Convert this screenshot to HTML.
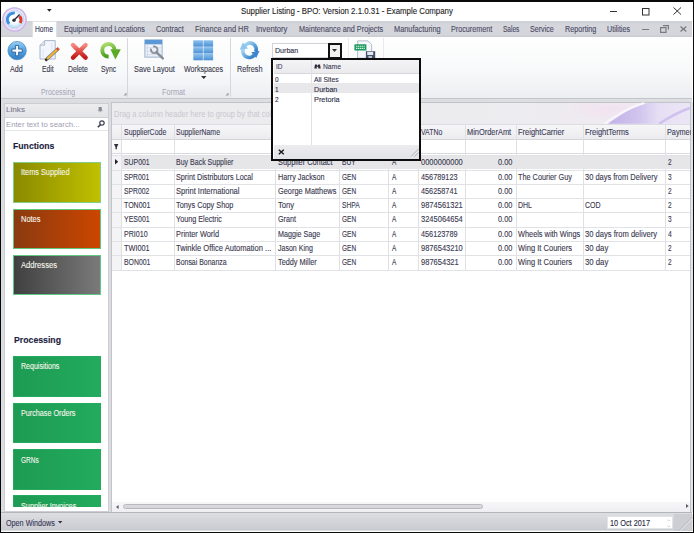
<!DOCTYPE html>
<html><head><meta charset="utf-8">
<style>
*{margin:0;padding:0;box-sizing:border-box}
html,body{width:694px;height:533px;overflow:hidden;background:#fff}
body{font-family:"Liberation Sans",sans-serif;position:relative}
.a{position:absolute}
.t{position:absolute;white-space:nowrap;transform-origin:0 0;-webkit-text-stroke:0.12px currentColor}
svg{position:absolute;overflow:visible}
</style></head><body>
<div class="a" style="left:1.30px;top:1.50px;width:691.20px;height:530.00px;background:#fff"></div>
<div class="t" style="left:240.80px;top:6.90px;font-size:8.80px;line-height:9.83px;color:#1e1e1e;transform:scaleX(0.8936);">Supplier Listing - BPO: Version 2.1.0.31 - Example Company</div>
<div class="a" style="left:610.00px;top:10.50px;width:6.50px;height:1.00px;background:#333"></div>
<svg style="left:641.5px;top:7.5px" width="8" height="8"><rect x="0.5" y="0.5" width="6.5" height="6.5" stroke="#333" fill="none" stroke-width="1"/></svg>
<svg style="left:673px;top:7px" width="9" height="8"><path d="M0.5 0.5L8 7.5M8 0.5L0.5 7.5" stroke="#333" stroke-width="1"/></svg>
<svg style="left:47.3px;top:9px" width="5" height="4"><path d="M0 0H4.6L2.3 2.8Z" fill="#222"/></svg>
<div class="a" style="left:1.30px;top:21.00px;width:691.20px;height:15.50px;background:linear-gradient(#cfd0d5,#d6d7dc 30%,#d4d5da 85%,#c9cacf)"></div>
<div class="a" style="left:31.70px;top:21.00px;width:25.70px;height:16.00px;background:#fff;border:1px solid #dedfe3;border-bottom:none"></div>
<div class="t" style="left:34.60px;top:25.00px;font-size:8.30px;line-height:9.27px;color:#3b3b5c;transform:scaleX(0.8083);">Home</div>
<div class="t" style="left:64.20px;top:25.00px;font-size:8.30px;line-height:9.27px;color:#4b4b66;transform:scaleX(0.8626);">Equipment and Locations</div>
<div class="t" style="left:156.00px;top:25.00px;font-size:8.30px;line-height:9.27px;color:#4b4b66;transform:scaleX(0.8831);">Contract</div>
<div class="t" style="left:194.80px;top:25.00px;font-size:8.30px;line-height:9.27px;color:#4b4b66;transform:scaleX(0.8987);">Finance and HR</div>
<div class="t" style="left:256.30px;top:25.00px;font-size:8.30px;line-height:9.27px;color:#4b4b66;transform:scaleX(0.9198);">Inventory</div>
<div class="t" style="left:298.80px;top:25.00px;font-size:8.30px;line-height:9.27px;color:#4b4b66;transform:scaleX(0.8773);">Maintenance and Projects</div>
<div class="t" style="left:394.00px;top:25.00px;font-size:8.30px;line-height:9.27px;color:#4b4b66;transform:scaleX(0.8879);">Manufacturing</div>
<div class="t" style="left:451.10px;top:25.00px;font-size:8.30px;line-height:9.27px;color:#4b4b66;transform:scaleX(0.8692);">Procurement</div>
<div class="t" style="left:503.30px;top:25.00px;font-size:8.30px;line-height:9.27px;color:#4b4b66;transform:scaleX(0.7900);">Sales</div>
<div class="t" style="left:530.30px;top:25.00px;font-size:8.30px;line-height:9.27px;color:#4b4b66;transform:scaleX(0.8598);">Service</div>
<div class="t" style="left:564.80px;top:25.00px;font-size:8.30px;line-height:9.27px;color:#4b4b66;transform:scaleX(0.8725);">Reporting</div>
<div class="t" style="left:607.00px;top:25.00px;font-size:8.30px;line-height:9.27px;color:#4b4b66;transform:scaleX(0.8598);">Utilities</div>
<div class="a" style="left:642.30px;top:29.20px;width:6.30px;height:1.30px;background:#7a7a82"></div>
<svg style="left:660px;top:25px" width="9" height="8"><path d="M3 0.6H8.4V4.6M0.6 2.6H6V7.4H0.6Z" stroke="#7a7a82" fill="none" stroke-width="1.2"/></svg>
<svg style="left:680px;top:26.2px" width="7" height="6"><path d="M0.5 0.5L6.3 5.5M6.3 0.5L0.5 5.5" stroke="#7a7a82" stroke-width="1.3"/></svg>
<svg style="left:1px;top:6px" width="27" height="27" viewBox="0 0 27 27">
<defs><radialGradient id="lface" cx="50%" cy="45%" r="50%"><stop offset="0.45" stop-color="#ffffff"/><stop offset="0.8" stop-color="#d6ecfa"/><stop offset="1" stop-color="#b8d8f2"/></radialGradient></defs>
<circle cx="13.5" cy="13.5" r="12.2" fill="#e6dbf3"/>
<circle cx="13.5" cy="13.5" r="11.6" fill="none" stroke="#c9b6e6" stroke-width="1.4"/>
<circle cx="13.5" cy="13.5" r="10.2" fill="#faf8fd"/>
<circle cx="13.5" cy="13.5" r="9.4" fill="none" stroke="#d4c6ec" stroke-width="0.9"/>
<circle cx="13.5" cy="13.5" r="8.8" fill="url(#lface)"/>
<path d="M8.2 17.8A6.3 6.3 0 0 1 13.8 7.2" stroke="#3a8ee0" stroke-width="2.8" fill="none"/>
<path d="M18.6 10.2A6.3 6.3 0 0 1 19.2 17" stroke="#e03a2a" stroke-width="3" fill="none"/>
<path d="M13 14.2L18.6 8.6" stroke="#2a3040" stroke-width="1.4"/><circle cx="13" cy="14.2" r="1.7" fill="#2a3040"/>
</svg>
<div class="a" style="left:1.30px;top:36.50px;width:691.20px;height:61.20px;background:linear-gradient(#fefefe,#f8f9fa 55%,#eceef1)"></div>
<div class="a" style="left:1.30px;top:86.00px;width:229.10px;height:11.70px;background:linear-gradient(#f0f1f4,#e9eaee)"></div>
<div class="a" style="left:1.30px;top:97.70px;width:691.20px;height:1.30px;background:#c3c4c9"></div>
<div class="a" style="left:1.30px;top:99.00px;width:691.20px;height:3.00px;background:#dfe0e4"></div>
<div class="a" style="left:127.30px;top:38.00px;width:1.00px;height:59.00px;background:#d6d7dc"></div>
<div class="a" style="left:230.40px;top:38.00px;width:1.00px;height:59.00px;background:#d6d7dc"></div>
<div class="a" style="left:347.70px;top:38.00px;width:1.00px;height:20.00px;background:#e9eaed"></div>
<div class="a" style="left:382.80px;top:38.00px;width:1.00px;height:20.00px;background:#e9eaed"></div>
<div class="t" style="left:41.20px;top:87.80px;font-size:8.30px;line-height:9.27px;color:#a2a2b4;transform:scaleX(0.8329);-webkit-text-stroke:0;">Processing</div>
<div class="t" style="left:161.80px;top:87.80px;font-size:8.30px;line-height:9.27px;color:#a2a2b4;transform:scaleX(0.8750);-webkit-text-stroke:0;">Format</div>
<svg style="left:122.5px;top:92px" width="4" height="4"><path d="M3.5 0.5V3.5H0.5Z" fill="#9a9aa2"/></svg>
<svg style="left:224.5px;top:92px" width="4" height="4"><path d="M3.5 0.5V3.5H0.5Z" fill="#9a9aa2"/></svg>
<div class="t" style="left:10.30px;top:64.80px;font-size:8.30px;line-height:9.27px;color:#3a3a4c;transform:scaleX(0.8601);">Add</div>
<div class="t" style="left:41.70px;top:64.80px;font-size:8.30px;line-height:9.27px;color:#3a3a4c;transform:scaleX(0.8111);">Edit</div>
<div class="t" style="left:67.90px;top:64.80px;font-size:8.30px;line-height:9.27px;color:#3a3a4c;transform:scaleX(0.8252);">Delete</div>
<div class="t" style="left:101.20px;top:64.80px;font-size:8.30px;line-height:9.27px;color:#3a3a4c;transform:scaleX(0.8184);">Sync</div>
<div class="t" style="left:134.00px;top:64.80px;font-size:8.30px;line-height:9.27px;color:#3a3a4c;transform:scaleX(0.8841);">Save Layout</div>
<div class="t" style="left:183.90px;top:64.80px;font-size:8.30px;line-height:9.27px;color:#3a3a4c;transform:scaleX(0.8592);">Workspaces</div>
<div class="t" style="left:236.90px;top:64.80px;font-size:8.30px;line-height:9.27px;color:#3a3a4c;transform:scaleX(0.8810);">Refresh</div>
<svg style="left:201px;top:75.5px" width="6" height="4"><path d="M0 0H5.5L2.75 3Z" fill="#333"/></svg>
<svg style="left:7px;top:40.8px" width="21" height="21" viewBox="0 0 21 21">
<defs><linearGradient id="ga" x1="0" y1="0" x2="0" y2="1"><stop offset="0" stop-color="#9ccff2"/><stop offset="0.45" stop-color="#5aa6e0"/><stop offset="1" stop-color="#2f7cc4"/></linearGradient></defs>
<circle cx="10.1" cy="9.6" r="9.2" fill="url(#ga)" stroke="#3f86c6" stroke-width="0.7"/>
<path d="M8.6 4.4H11.6V8.1H15.3V11.1H11.6V14.8H8.6V11.1H4.9V8.1H8.6Z" fill="#fafcff" stroke="#2a5f9c" stroke-width="0.9"/>
</svg>
<svg style="left:38.5px;top:40px" width="22" height="22" viewBox="0 0 22 22">
<path d="M5.6 0.6H16.2V19H1V5.2Z" fill="#f2f5fb" stroke="#a2aec6" stroke-width="0.9"/>
<path d="M1 5.2H5.6V0.6" fill="#dfe5f0" stroke="#a2aec6" stroke-width="0.8"/>
<path d="M4 9V17M12.8 3V17" stroke="#d4e4f4" stroke-width="0.8"/>
<path d="M18.6 9.2L7.4 19.6" stroke="#4a6aa0" stroke-width="3.4"/>
<path d="M18.6 9.2L7.4 19.6" stroke="#f2b430" stroke-width="2.4"/>
<path d="M19.8 8.1L17.9 9.9" stroke="#e0503a" stroke-width="3.2"/>
<path d="M8 19L6.3 20.6" stroke="#2a2a36" stroke-width="2.4"/>
</svg>
<svg style="left:69.5px;top:41.5px" width="19" height="19" viewBox="0 0 19 19">
<defs><linearGradient id="gd" x1="0" y1="0" x2="0" y2="1"><stop offset="0" stop-color="#f48a84"/><stop offset="0.5" stop-color="#e04a44"/><stop offset="1" stop-color="#c01c1c"/></linearGradient></defs>
<path d="M3 3L15.6 15.6M15.6 3L3 15.6" stroke="url(#gd)" stroke-width="4.4" stroke-linecap="round"/>
</svg>
<svg style="left:98.5px;top:41px" width="23" height="20" viewBox="0 0 23 20">
<defs><linearGradient id="gs" x1="0" y1="0" x2="0.3" y2="1"><stop offset="0" stop-color="#b0e070"/><stop offset="1" stop-color="#4a9e1c"/></linearGradient></defs>
<path d="M9.6 15.4A6.2 6.2 0 1 1 15.6 8.6" stroke="url(#gs)" stroke-width="4" fill="none"/>
<path d="M11.4 8.2H21.8L16.4 18.6Z" fill="#5aaa26"/>
</svg>
<svg style="left:143.5px;top:38.8px" width="22" height="22" viewBox="0 0 22 22">
<rect x="0.9" y="0.9" width="17.2" height="17.2" fill="#eef3fa" stroke="#90a8c8" stroke-width="0.9"/>
<rect x="0.9" y="0.9" width="17.2" height="4.4" fill="#5a98d6"/>
<path d="M1 8.8H18M1 12.3H18M1 15.6H18M3.4 5.3V18" stroke="#c8d4e4" stroke-width="0.7"/>
<path d="M9.07 7.7A3.3 3.3 0 1 1 7.1 9.67" stroke="#8c939c" stroke-width="1.9" fill="none"/>
<path d="M12.6 13.4L18.8 19.4" stroke="#858c96" stroke-width="2.4" stroke-linecap="round"/>
</svg>
<svg style="left:193px;top:39.6px" width="21" height="21" viewBox="0 0 21 21">
<defs><linearGradient id="gw" x1="0" y1="0" x2="0" y2="1"><stop offset="0" stop-color="#8cc0ec"/><stop offset="1" stop-color="#4a90d6"/></linearGradient></defs>
<rect x="0.30" y="0.30" width="9.6" height="6.4" fill="url(#gw)"/><rect x="10.50" y="0.30" width="9.6" height="6.4" fill="url(#gw)"/><rect x="0.30" y="7.10" width="9.6" height="6.4" fill="url(#gw)"/><rect x="10.50" y="7.10" width="9.6" height="6.4" fill="url(#gw)"/><rect x="0.30" y="13.90" width="9.6" height="6.4" fill="url(#gw)"/><rect x="10.50" y="13.90" width="9.6" height="6.4" fill="url(#gw)"/></svg>
<svg style="left:236px;top:38.2px" width="27" height="24" viewBox="0 0 27 24">
<defs><linearGradient id="gr" x1="0" y1="0" x2="1" y2="1"><stop offset="0" stop-color="#b4dcf6"/><stop offset="0.6" stop-color="#5aa2dc"/><stop offset="1" stop-color="#2f78c0"/></linearGradient></defs>
<path d="M8.2 8.6A6 6 0 0 1 19.6 13.8" stroke="url(#gr)" stroke-width="3.6" fill="none"/>
<path d="M18.8 15.8A6 6 0 0 1 7.4 10.6" stroke="url(#gr)" stroke-width="3.6" fill="none"/>
<path d="M3.8 11.8L6.8 4.6L12 10.4Z" fill="#8cc6ee"/>
<path d="M23.6 12.8L20.2 20L15.2 14.2Z" fill="#3c86cc"/>
</svg>
<div class="a" style="left:272.30px;top:43.20px;width:57.00px;height:15.00px;background:#fff;border:1px solid #d0d2d8"></div>
<div class="t" style="left:275.30px;top:47.30px;font-size:7.80px;line-height:8.71px;color:#2e2e46;transform:scaleX(0.9068);">Durban</div>
<div class="a" style="left:327.80px;top:42.50px;width:14.20px;height:16.00px;background:#f0f0f2;border:2px solid #111"></div>
<svg style="left:332.3px;top:49px" width="6" height="4"><path d="M0 0H5L2.5 3Z" fill="#333"/></svg>
<svg style="left:353.5px;top:39.5px" width="22" height="20" viewBox="0 0 22 20">
<path d="M3.6 0.9H14L17.6 4.5V18.2H3.6Z" fill="#f6f8fb" stroke="#aab2c6" stroke-width="0.9"/>
<rect x="0.4" y="4.3" width="12" height="6.2" rx="0.6" fill="#1d9a5e"/>
<path d="M2 6.2H10.8M2 8.4H10.8" stroke="#d8f0e2" stroke-width="1.1" stroke-dasharray="1.4 0.6"/>
<rect x="11.9" y="11.2" width="9.3" height="7" fill="#46506a"/>
<rect x="13.2" y="11.8" width="6" height="3.2" fill="#e4e9f0"/>
<rect x="14.4" y="16" width="3.6" height="2.2" fill="#b8c2d0"/>
</svg>
<div class="a" style="left:1.30px;top:99.60px;width:691.20px;height:412.00px;background:#dcdde1"></div>
<div class="a" style="left:3.80px;top:102.60px;width:105.20px;height:409.00px;background:#fff;border:1px solid #cdced3"></div>
<div class="a" style="left:4.80px;top:103.60px;width:103.20px;height:14.00px;background:linear-gradient(#ececee,#e2e3e6)"></div>
<div class="a" style="left:4.80px;top:117.40px;width:103.20px;height:0.80px;background:#cfd0d4"></div>
<div class="t" style="left:6.30px;top:106.30px;font-size:8.00px;line-height:8.94px;color:#7c7c92;transform:scaleX(1.0176);">Links</div>
<svg style="left:97.5px;top:107px" width="5" height="5"><rect x="0.6" y="0" width="3.2" height="3.3" fill="#8a8a96"/><rect x="0" y="3.2" width="4.4" height="0.9" fill="#8a8a96"/><rect x="1.8" y="4" width="0.8" height="1.2" fill="#8a8a96"/></svg>
<div class="a" style="left:4.80px;top:118.20px;width:103.20px;height:11.40px;background:#fff"></div>
<div class="a" style="left:4.80px;top:129.60px;width:103.20px;height:0.80px;background:#e4e5e8"></div>
<div class="t" style="left:6.20px;top:120.60px;font-size:8.00px;line-height:8.94px;color:#9e9eb2;transform:scaleX(0.9667);-webkit-text-stroke:0;">Enter text to search...</div>
<svg style="left:97.2px;top:120px" width="8" height="8"><circle cx="5" cy="3" r="2.2" stroke="#3c3c4c" stroke-width="1.2" fill="none"/><path d="M3.5 4.6L0.8 7.3" stroke="#3c3c4c" stroke-width="1.5"/></svg>
<div class="t" style="left:13.30px;top:141.00px;font-size:9.00px;line-height:10.05px;color:#1c1c40;font-weight:bold;transform:scaleX(0.9629);">Functions</div>
<div class="t" style="left:13.50px;top:335.00px;font-size:9.00px;line-height:10.05px;color:#1c1c40;font-weight:bold;transform:scaleX(0.9687);">Processing</div>
<div class="a" style="left:4.8px;top:130.4px;width:103.2px;height:377px;overflow:hidden">
<div class="a" style="left:8.40px;top:31.50px;width:87.50px;height:40.90px;background:linear-gradient(90deg,#8a8a00,#c0c000);border:1px solid #7fcf8a"></div>
<div class="t" style="left:16.20px;top:38.00px;font-size:8.30px;line-height:9.27px;color:#f4f4ea;transform:scaleX(0.8834);">Items Supplied</div>
<div class="a" style="left:8.40px;top:78.50px;width:87.50px;height:40.10px;background:linear-gradient(90deg,#8a3a10,#cc4600);border:1px solid #62c87e"></div>
<div class="t" style="left:16.20px;top:85.00px;font-size:8.30px;line-height:9.27px;color:#f4f4ea;transform:scaleX(0.8995);">Notes</div>
<div class="a" style="left:8.40px;top:124.60px;width:87.50px;height:40.50px;background:linear-gradient(90deg,#404040,#7a7a7a);border:1px solid #60c888"></div>
<div class="t" style="left:16.20px;top:131.10px;font-size:8.30px;line-height:9.27px;color:#f4f4ea;transform:scaleX(0.9180);">Addresses</div>
<div class="a" style="left:8.40px;top:225.50px;width:87.50px;height:40.90px;background:linear-gradient(90deg,#1d9b52,#22ab5e);border:1px solid #22ab5e"></div>
<div class="t" style="left:16.20px;top:232.00px;font-size:8.30px;line-height:9.27px;color:#f4f4ea;transform:scaleX(0.8494);">Requisitions</div>
<div class="a" style="left:8.40px;top:272.40px;width:87.50px;height:40.30px;background:linear-gradient(90deg,#1d9b52,#22ab5e);border:1px solid #22ab5e"></div>
<div class="t" style="left:16.20px;top:278.90px;font-size:8.30px;line-height:9.27px;color:#f4f4ea;transform:scaleX(0.8687);">Purchase Orders</div>
<div class="a" style="left:8.40px;top:318.70px;width:87.50px;height:40.60px;background:linear-gradient(90deg,#1d9b52,#22ab5e);border:1px solid #22ab5e"></div>
<div class="t" style="left:16.20px;top:325.20px;font-size:8.30px;line-height:9.27px;color:#f4f4ea;transform:scaleX(0.7834);">GRNs</div>
<div class="a" style="left:8.40px;top:365.10px;width:87.50px;height:39.50px;background:linear-gradient(90deg,#1d9b52,#22ab5e);border:1px solid #22ab5e"></div>
<div class="t" style="left:16.20px;top:371.60px;font-size:8.30px;line-height:9.27px;color:#f4f4ea;transform:scaleX(0.8749);">Supplier Invoices</div>
</div>
<div class="a" style="left:110.50px;top:102.00px;width:580.70px;height:410.00px;background:#fff;border:1px solid #c3c4c9"></div>
<div class="a" style="left:111.50px;top:103.00px;width:578.70px;height:20.80px;background:linear-gradient(90deg,#ececee 0,#ececee 60%,#efeaf3 100%)"></div>
<svg style="left:560px;top:103px" width="130" height="20.8" viewBox="0 0 130 20.8">
<defs><linearGradient id="sw1" gradientUnits="userSpaceOnUse" x1="48" y1="0" x2="130" y2="0"><stop offset="0" stop-color="#c2b0e8"/><stop offset="0.4" stop-color="#d2c6ee"/><stop offset="0.62" stop-color="#e6dff4"/><stop offset="1" stop-color="#ebe6f5"/></linearGradient>
<radialGradient id="sw2" cx="0.5" cy="0.3" r="0.6"><stop offset="0" stop-color="#f2e2f0"/><stop offset="1" stop-color="#f2e2f0" stop-opacity="0"/></radialGradient></defs>
<rect x="10" y="0" width="80" height="20.8" fill="url(#sw2)"/>
<path d="M48 20.8C60 12 72 4 88 0H130V20.8Z" fill="url(#sw1)"/>
<path d="M44.5 20.8C57 12 69 4 84 0" stroke="#f8f6fc" stroke-width="2.2" fill="none"/>
<path d="M99 20.8C108 15 118 9 130 5" stroke="#d0c0ee" stroke-width="2.4" fill="none"/>
</svg>
<div class="t" style="left:113.50px;top:109.60px;font-size:8.30px;line-height:9.27px;color:#c8c8ce;transform:scaleX(0.9049);-webkit-text-stroke:0;">Drag a column header here to group by that column</div>
<div class="a" style="left:111.50px;top:123.60px;width:578.70px;height:15.40px;background:linear-gradient(#f6f6f8,#ececef);border-top:1px solid #dcdde0"></div>
<div class="a" style="left:111.50px;top:139.20px;width:578.70px;height:0.80px;background:#d4d5d9"></div>
<div class="a" style="left:111.50px;top:152.60px;width:578.70px;height:1.90px;background:#d9dadd"></div>
<div class="a" style="left:121.30px;top:123.80px;width:0.90px;height:145.80px;background:#dfe0e3"></div>
<div class="a" style="left:173.60px;top:123.80px;width:0.90px;height:145.80px;background:#dfe0e3"></div>
<div class="a" style="left:275.20px;top:123.80px;width:0.90px;height:145.80px;background:#dfe0e3"></div>
<div class="a" style="left:339.40px;top:123.80px;width:0.90px;height:145.80px;background:#dfe0e3"></div>
<div class="a" style="left:388.40px;top:123.80px;width:0.90px;height:145.80px;background:#dfe0e3"></div>
<div class="a" style="left:418.10px;top:123.80px;width:0.90px;height:145.80px;background:#dfe0e3"></div>
<div class="a" style="left:465.00px;top:123.80px;width:0.90px;height:145.80px;background:#dfe0e3"></div>
<div class="a" style="left:515.50px;top:123.80px;width:0.90px;height:145.80px;background:#dfe0e3"></div>
<div class="a" style="left:583.00px;top:123.80px;width:0.90px;height:145.80px;background:#dfe0e3"></div>
<div class="a" style="left:664.50px;top:123.80px;width:0.90px;height:145.80px;background:#dfe0e3"></div>
<div class="a" style="left:111.50px;top:140.00px;width:9.80px;height:12.60px;background:#fafafb"></div>
<div class="a" style="left:111.50px;top:155.20px;width:9.80px;height:114.40px;background:#f4f4f6"></div>
<div class="t" style="left:124.30px;top:127.50px;font-size:8.30px;line-height:9.27px;color:#40405a;transform:scaleX(0.8410);">SupplierCode</div>
<div class="t" style="left:176.00px;top:127.50px;font-size:8.30px;line-height:9.27px;color:#40405a;transform:scaleX(0.8367);">SupplierName</div>
<div class="t" style="left:420.60px;top:127.50px;font-size:8.30px;line-height:9.27px;color:#40405a;transform:scaleX(0.8346);">VATNo</div>
<div class="t" style="left:467.30px;top:127.50px;font-size:8.30px;line-height:9.27px;color:#40405a;transform:scaleX(0.8958);">MinOrderAmt</div>
<div class="t" style="left:517.60px;top:127.50px;font-size:8.30px;line-height:9.27px;color:#40405a;transform:scaleX(0.9024);">FreightCarrier</div>
<div class="t" style="left:585.10px;top:127.50px;font-size:8.30px;line-height:9.27px;color:#40405a;transform:scaleX(0.9044);">FreightTerms</div>
<div class="t" style="left:666.50px;top:127.50px;font-size:8.30px;line-height:9.27px;color:#40405a;transform:scaleX(0.8771);">Payment</div>
<svg style="left:113.8px;top:143.6px" width="5" height="6"><path d="M0 0H4.4L2.9 3.2V5.2H1.5V3.2Z" fill="#2e2e40"/></svg>
<div class="a" style="left:121.30px;top:155.20px;width:568.90px;height:14.30px;background:#e6e6e9"></div>
<div class="a" style="left:111.50px;top:155.20px;width:578.70px;height:0.90px;background:#e1e2e5"></div>
<div class="a" style="left:111.50px;top:169.50px;width:578.70px;height:0.90px;background:#e1e2e5"></div>
<div class="a" style="left:111.50px;top:183.80px;width:578.70px;height:0.90px;background:#e1e2e5"></div>
<div class="a" style="left:111.50px;top:198.10px;width:578.70px;height:0.90px;background:#e1e2e5"></div>
<div class="a" style="left:111.50px;top:212.40px;width:578.70px;height:0.90px;background:#e1e2e5"></div>
<div class="a" style="left:111.50px;top:226.70px;width:578.70px;height:0.90px;background:#e1e2e5"></div>
<div class="a" style="left:111.50px;top:241.00px;width:578.70px;height:0.90px;background:#e1e2e5"></div>
<div class="a" style="left:111.50px;top:255.30px;width:578.70px;height:0.90px;background:#e1e2e5"></div>
<div class="a" style="left:111.50px;top:269.60px;width:578.70px;height:0.90px;background:#e1e2e5"></div>
<svg style="left:114.5px;top:159px" width="4" height="6"><path d="M0 0L3.2 2.7L0 5.4Z" fill="#222"/></svg>
<div class="t" style="left:124.30px;top:158.20px;font-size:8.30px;line-height:9.27px;color:#3a3a50;transform:scaleX(0.8312);">SUP001</div>
<div class="t" style="left:176.00px;top:158.20px;font-size:8.30px;line-height:9.27px;color:#3a3a50;transform:scaleX(0.8464);">Buy Back Supplier</div>
<div class="t" style="left:277.60px;top:158.20px;font-size:8.30px;line-height:9.27px;color:#3a3a50;transform:scaleX(0.8898);">Supplier Contact</div>
<div class="t" style="left:342.10px;top:158.20px;font-size:8.30px;line-height:9.27px;color:#3a3a50;transform:scaleX(0.7970);">BUY</div>
<div class="t" style="left:391.80px;top:158.20px;font-size:8.30px;line-height:9.27px;color:#3a3a50;transform:scaleX(0.7800);">A</div>
<div class="t" style="left:421.10px;top:158.20px;font-size:8.30px;line-height:9.27px;color:#3a3a50;transform:scaleX(0.9055);">0000000000</div>
<div class="t" style="left:498.00px;top:158.20px;font-size:8.30px;line-height:9.27px;color:#3a3a50;transform:scaleX(0.8854);">0.00</div>
<div class="t" style="left:667.80px;top:158.20px;font-size:8.30px;line-height:9.27px;color:#3a3a50;transform:scaleX(0.7800);">2</div>
<div class="t" style="left:124.30px;top:172.50px;font-size:8.30px;line-height:9.27px;color:#3a3a50;transform:scaleX(0.8215);">SPR001</div>
<div class="t" style="left:176.00px;top:172.50px;font-size:8.30px;line-height:9.27px;color:#3a3a50;transform:scaleX(0.8740);">Sprint Distributors Local</div>
<div class="t" style="left:277.60px;top:172.50px;font-size:8.30px;line-height:9.27px;color:#3a3a50;transform:scaleX(0.8785);">Harry Jackson</div>
<div class="t" style="left:342.10px;top:172.50px;font-size:8.30px;line-height:9.27px;color:#3a3a50;transform:scaleX(0.7895);">GEN</div>
<div class="t" style="left:391.80px;top:172.50px;font-size:8.30px;line-height:9.27px;color:#3a3a50;transform:scaleX(0.7800);">A</div>
<div class="t" style="left:421.10px;top:172.50px;font-size:8.30px;line-height:9.27px;color:#3a3a50;transform:scaleX(0.8786);">456789123</div>
<div class="t" style="left:498.00px;top:172.50px;font-size:8.30px;line-height:9.27px;color:#3a3a50;transform:scaleX(0.8854);">0.00</div>
<div class="t" style="left:517.60px;top:172.50px;font-size:8.30px;line-height:9.27px;color:#3a3a50;transform:scaleX(0.8801);">The Courier Guy</div>
<div class="t" style="left:585.10px;top:172.50px;font-size:8.30px;line-height:9.27px;color:#3a3a50;transform:scaleX(0.9021);">30 days from Delivery</div>
<div class="t" style="left:667.80px;top:172.50px;font-size:8.30px;line-height:9.27px;color:#3a3a50;transform:scaleX(0.7800);">3</div>
<div class="t" style="left:124.30px;top:186.80px;font-size:8.30px;line-height:9.27px;color:#3a3a50;transform:scaleX(0.8215);">SPR002</div>
<div class="t" style="left:176.00px;top:186.80px;font-size:8.30px;line-height:9.27px;color:#3a3a50;transform:scaleX(0.9114);">Sprint International</div>
<div class="t" style="left:277.60px;top:186.80px;font-size:8.30px;line-height:9.27px;color:#3a3a50;transform:scaleX(0.8914);">George Matthews</div>
<div class="t" style="left:342.10px;top:186.80px;font-size:8.30px;line-height:9.27px;color:#3a3a50;transform:scaleX(0.7895);">GEN</div>
<div class="t" style="left:391.80px;top:186.80px;font-size:8.30px;line-height:9.27px;color:#3a3a50;transform:scaleX(0.7800);">A</div>
<div class="t" style="left:421.10px;top:186.80px;font-size:8.30px;line-height:9.27px;color:#3a3a50;transform:scaleX(0.8786);">456258741</div>
<div class="t" style="left:498.00px;top:186.80px;font-size:8.30px;line-height:9.27px;color:#3a3a50;transform:scaleX(0.8854);">0.00</div>
<div class="t" style="left:667.80px;top:186.80px;font-size:8.30px;line-height:9.27px;color:#3a3a50;transform:scaleX(0.7800);">2</div>
<div class="t" style="left:124.30px;top:201.10px;font-size:8.30px;line-height:9.27px;color:#3a3a50;transform:scaleX(0.8457);">TON001</div>
<div class="t" style="left:176.00px;top:201.10px;font-size:8.30px;line-height:9.27px;color:#3a3a50;transform:scaleX(0.8823);">Tonys Copy Shop</div>
<div class="t" style="left:277.60px;top:201.10px;font-size:8.30px;line-height:9.27px;color:#3a3a50;transform:scaleX(0.9242);">Tony</div>
<div class="t" style="left:342.10px;top:201.10px;font-size:8.30px;line-height:9.27px;color:#3a3a50;transform:scaleX(0.8005);">SHPA</div>
<div class="t" style="left:391.80px;top:201.10px;font-size:8.30px;line-height:9.27px;color:#3a3a50;transform:scaleX(0.7800);">A</div>
<div class="t" style="left:421.10px;top:201.10px;font-size:8.30px;line-height:9.27px;color:#3a3a50;transform:scaleX(0.9055);">9874561321</div>
<div class="t" style="left:498.00px;top:201.10px;font-size:8.30px;line-height:9.27px;color:#3a3a50;transform:scaleX(0.8854);">0.00</div>
<div class="t" style="left:517.60px;top:201.10px;font-size:8.30px;line-height:9.27px;color:#3a3a50;transform:scaleX(0.8369);">DHL</div>
<div class="t" style="left:585.10px;top:201.10px;font-size:8.30px;line-height:9.27px;color:#3a3a50;transform:scaleX(0.8459);">COD</div>
<div class="t" style="left:667.80px;top:201.10px;font-size:8.30px;line-height:9.27px;color:#3a3a50;transform:scaleX(0.7800);">2</div>
<div class="t" style="left:124.30px;top:215.40px;font-size:8.30px;line-height:9.27px;color:#3a3a50;transform:scaleX(0.8439);">YES001</div>
<div class="t" style="left:176.00px;top:215.40px;font-size:8.30px;line-height:9.27px;color:#3a3a50;transform:scaleX(0.8720);">Young Electric</div>
<div class="t" style="left:277.60px;top:215.40px;font-size:8.30px;line-height:9.27px;color:#3a3a50;transform:scaleX(0.8623);">Grant</div>
<div class="t" style="left:342.10px;top:215.40px;font-size:8.30px;line-height:9.27px;color:#3a3a50;transform:scaleX(0.7895);">GEN</div>
<div class="t" style="left:391.80px;top:215.40px;font-size:8.30px;line-height:9.27px;color:#3a3a50;transform:scaleX(0.7800);">A</div>
<div class="t" style="left:421.10px;top:215.40px;font-size:8.30px;line-height:9.27px;color:#3a3a50;transform:scaleX(0.9055);">3245064654</div>
<div class="t" style="left:498.00px;top:215.40px;font-size:8.30px;line-height:9.27px;color:#3a3a50;transform:scaleX(0.8854);">0.00</div>
<div class="t" style="left:667.80px;top:215.40px;font-size:8.30px;line-height:9.27px;color:#3a3a50;transform:scaleX(0.7800);">3</div>
<div class="t" style="left:124.30px;top:229.70px;font-size:8.30px;line-height:9.27px;color:#3a3a50;transform:scaleX(0.8562);">PRI010</div>
<div class="t" style="left:176.00px;top:229.70px;font-size:8.30px;line-height:9.27px;color:#3a3a50;transform:scaleX(0.8928);">Printer World</div>
<div class="t" style="left:277.60px;top:229.70px;font-size:8.30px;line-height:9.27px;color:#3a3a50;transform:scaleX(0.8628);">Maggie Sage</div>
<div class="t" style="left:342.10px;top:229.70px;font-size:8.30px;line-height:9.27px;color:#3a3a50;transform:scaleX(0.7895);">GEN</div>
<div class="t" style="left:391.80px;top:229.70px;font-size:8.30px;line-height:9.27px;color:#3a3a50;transform:scaleX(0.7800);">A</div>
<div class="t" style="left:421.10px;top:229.70px;font-size:8.30px;line-height:9.27px;color:#3a3a50;transform:scaleX(0.8786);">456123789</div>
<div class="t" style="left:498.00px;top:229.70px;font-size:8.30px;line-height:9.27px;color:#3a3a50;transform:scaleX(0.8854);">0.00</div>
<div class="t" style="left:517.60px;top:229.70px;font-size:8.30px;line-height:9.27px;color:#3a3a50;transform:scaleX(0.8872);">Wheels with Wings</div>
<div class="t" style="left:585.10px;top:229.70px;font-size:8.30px;line-height:9.27px;color:#3a3a50;transform:scaleX(0.9127);">30 days from delivery</div>
<div class="t" style="left:667.80px;top:229.70px;font-size:8.30px;line-height:9.27px;color:#3a3a50;transform:scaleX(0.8234);">4</div>
<div class="t" style="left:124.30px;top:244.00px;font-size:8.30px;line-height:9.27px;color:#3a3a50;transform:scaleX(0.8844);">TWI001</div>
<div class="t" style="left:176.00px;top:244.00px;font-size:8.30px;line-height:9.27px;color:#3a3a50;transform:scaleX(0.9123);">Twinkle Office Automation ...</div>
<div class="t" style="left:277.60px;top:244.00px;font-size:8.30px;line-height:9.27px;color:#3a3a50;transform:scaleX(0.8474);">Jason King</div>
<div class="t" style="left:342.10px;top:244.00px;font-size:8.30px;line-height:9.27px;color:#3a3a50;transform:scaleX(0.7895);">GEN</div>
<div class="t" style="left:391.80px;top:244.00px;font-size:8.30px;line-height:9.27px;color:#3a3a50;transform:scaleX(0.7800);">A</div>
<div class="t" style="left:421.10px;top:244.00px;font-size:8.30px;line-height:9.27px;color:#3a3a50;transform:scaleX(0.9055);">9876543210</div>
<div class="t" style="left:498.00px;top:244.00px;font-size:8.30px;line-height:9.27px;color:#3a3a50;transform:scaleX(0.8854);">0.00</div>
<div class="t" style="left:517.60px;top:244.00px;font-size:8.30px;line-height:9.27px;color:#3a3a50;transform:scaleX(0.9076);">Wing It Couriers</div>
<div class="t" style="left:585.10px;top:244.00px;font-size:8.30px;line-height:9.27px;color:#3a3a50;transform:scaleX(0.9351);">30 day</div>
<div class="t" style="left:667.80px;top:244.00px;font-size:8.30px;line-height:9.27px;color:#3a3a50;transform:scaleX(0.7800);">2</div>
<div class="t" style="left:124.30px;top:258.30px;font-size:8.30px;line-height:9.27px;color:#3a3a50;transform:scaleX(0.8294);">BON001</div>
<div class="t" style="left:176.00px;top:258.30px;font-size:8.30px;line-height:9.27px;color:#3a3a50;transform:scaleX(0.8386);">Bonsai Bonanza</div>
<div class="t" style="left:277.60px;top:258.30px;font-size:8.30px;line-height:9.27px;color:#3a3a50;transform:scaleX(0.8762);">Teddy Miller</div>
<div class="t" style="left:342.10px;top:258.30px;font-size:8.30px;line-height:9.27px;color:#3a3a50;transform:scaleX(0.7895);">GEN</div>
<div class="t" style="left:391.80px;top:258.30px;font-size:8.30px;line-height:9.27px;color:#3a3a50;transform:scaleX(0.7800);">A</div>
<div class="t" style="left:421.10px;top:258.30px;font-size:8.30px;line-height:9.27px;color:#3a3a50;transform:scaleX(0.9075);">987654321</div>
<div class="t" style="left:498.00px;top:258.30px;font-size:8.30px;line-height:9.27px;color:#3a3a50;transform:scaleX(0.8854);">0.00</div>
<div class="t" style="left:517.60px;top:258.30px;font-size:8.30px;line-height:9.27px;color:#3a3a50;transform:scaleX(0.9076);">Wing It Couriers</div>
<div class="t" style="left:585.10px;top:258.30px;font-size:8.30px;line-height:9.27px;color:#3a3a50;transform:scaleX(0.9351);">30 day</div>
<div class="t" style="left:667.80px;top:258.30px;font-size:8.30px;line-height:9.27px;color:#3a3a50;transform:scaleX(0.7800);">2</div>
<div class="a" style="left:690.60px;top:102.00px;width:3.00px;height:410.00px;background:#e2e3e6"></div>
<div class="a" style="left:111.50px;top:501.60px;width:578.70px;height:10.40px;background:linear-gradient(#f7f7f9,#efeff2)"></div>
<svg style="left:115.6px;top:504.8px" width="3" height="4"><path d="M2.6 0V4L0 2Z" fill="#5a5a66"/></svg>
<svg style="left:685.6px;top:504.2px" width="3" height="4"><path d="M0 0V4L2.6 2Z" fill="#5a5a66"/></svg>
<div class="a" style="left:122.60px;top:503.60px;width:360.60px;height:5.60px;background:linear-gradient(#dcdce0,#d4d4d8);border:0.9px solid #b8b8c0;border-radius:3px"></div>
<div class="a" style="left:1.30px;top:512.30px;width:691.20px;height:19.20px;background:linear-gradient(#dedfe3,#c9cad0)"></div>
<div class="a" style="left:1.30px;top:512.30px;width:691.20px;height:1.20px;background:#b4b5bb"></div>
<div class="a" style="left:1.30px;top:530.30px;width:691.20px;height:1.20px;background:#dcdde1"></div>
<div class="t" style="left:6.10px;top:518.90px;font-size:8.30px;line-height:9.27px;color:#3a3a58;transform:scaleX(0.8688);">Open Windows</div>
<svg style="left:58.3px;top:521.4px" width="5" height="3"><path d="M0 0H4.4L2.2 2.6Z" fill="#333"/></svg>
<div class="a" style="left:606.50px;top:516.20px;width:66.40px;height:13.00px;background:#fff;border:1px solid #e2e3e6"></div>
<div class="t" style="left:609.80px;top:518.80px;font-size:8.30px;line-height:9.27px;color:#2a2a3e;transform:scaleX(0.8846);">10 Oct 2017</div>
<svg style="left:667px;top:518.8px" width="4" height="9"><path d="M0.5 2L1.7 0.9L2.9 2" stroke="#b4b4bc" fill="none" stroke-width="0.7"/><path d="M0.5 6.9L1.7 8L2.9 6.9" stroke="#b4b4bc" fill="none" stroke-width="0.7"/></svg>
<svg style="left:674px;top:513.5px" width="18.5" height="17"><rect x="0" y="0" width="18.5" height="17" fill="#cdced4"/><path d="M18.5 3L4.5 17" stroke="#b4b5bc" stroke-width="1"/><path d="M18.5 4.2L5.7 17" stroke="#ececf0" stroke-width="0.8"/></svg>
<div class="a" style="left:271.10px;top:57.50px;width:150.10px;height:103.70px;background:#fff;border:2.5px solid #0c0c0c"></div>
<div class="a" style="left:273.60px;top:60.00px;width:145.10px;height:12.80px;background:linear-gradient(#f4f4f6,#ebebee)"></div>
<div class="a" style="left:273.60px;top:72.50px;width:145.10px;height:0.80px;background:#d6d7da"></div>
<div class="a" style="left:310.80px;top:60.00px;width:0.80px;height:85.20px;background:#e0e1e4"></div>
<div class="a" style="left:273.60px;top:82.70px;width:145.10px;height:10.60px;background:#e8e8ea"></div>
<div class="t" style="left:275.50px;top:62.60px;font-size:8.00px;line-height:8.94px;color:#40405a;transform:scaleX(0.8125);">ID</div>
<svg style="left:314px;top:62.6px" width="7" height="6"><path d="M0.3 5.5L1 1.5H2.8L3.1 2.5H3.9L4.2 1.5H6L6.7 5.5H4.2V3.8H2.8V5.5Z" fill="#2a2a3a"/></svg>
<div class="t" style="left:322.80px;top:62.60px;font-size:8.00px;line-height:8.94px;color:#40405a;transform:scaleX(0.8433);">Name</div>
<div class="t" style="left:275.30px;top:75.50px;font-size:8.00px;line-height:8.94px;color:#30304a;transform:scaleX(0.8094);">0</div>
<div class="t" style="left:313.90px;top:75.50px;font-size:8.00px;line-height:8.94px;color:#30304a;transform:scaleX(0.8513);">All Sites</div>
<div class="t" style="left:275.30px;top:85.70px;font-size:8.00px;line-height:8.94px;color:#30304a;transform:scaleX(0.8094);">1</div>
<div class="t" style="left:313.90px;top:85.70px;font-size:8.00px;line-height:8.94px;color:#30304a;transform:scaleX(0.8880);">Durban</div>
<div class="t" style="left:275.30px;top:95.70px;font-size:8.00px;line-height:8.94px;color:#30304a;transform:scaleX(0.8094);">2</div>
<div class="t" style="left:313.90px;top:95.70px;font-size:8.00px;line-height:8.94px;color:#30304a;transform:scaleX(0.9138);">Pretoria</div>
<div class="a" style="left:273.60px;top:145.20px;width:145.10px;height:13.50px;background:linear-gradient(#ececef,#e2e3e6)"></div>
<svg style="left:278.3px;top:149.4px" width="7" height="6"><path d="M0.8 0.8L5.8 5.2M5.8 0.8L0.8 5.2" stroke="#1a1a1a" stroke-width="1.5"/></svg>
<svg style="left:410px;top:148px" width="9" height="10"><path d="M8.5 1L1 8.5M8.5 4.5L4.5 8.5" stroke="#a0a0a8" stroke-width="0.8"/></svg>
<div class="a" style="left:0.00px;top:0.00px;width:694.00px;height:1.50px;background:#0a0a0a"></div>
<div class="a" style="left:0.00px;top:0.00px;width:1.30px;height:533.00px;background:#0a0a0a"></div>
<div class="a" style="left:692.50px;top:0.00px;width:1.50px;height:533.00px;background:#0a0a0a"></div>
<div class="a" style="left:0.00px;top:531.50px;width:694.00px;height:1.50px;background:#0a0a0a"></div>
</body></html>
